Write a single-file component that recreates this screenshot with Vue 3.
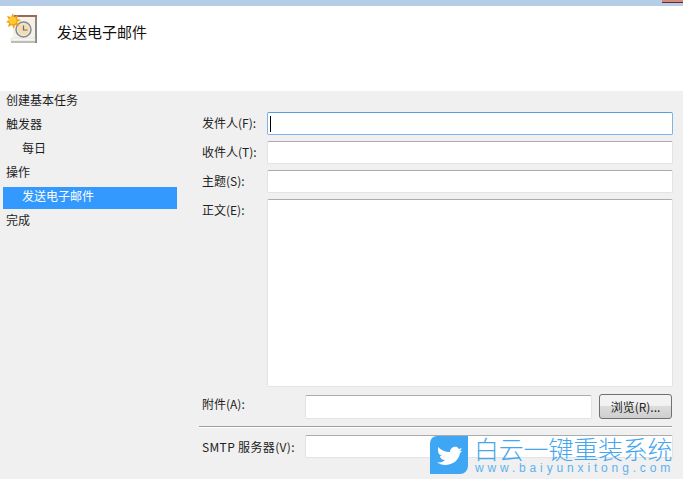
<script setup>
const tasks = [
  { label: '创建基本任务' },
  { label: '触发器' },
  { label: '每日', sub: true },
  { label: '操作' },
  { label: '发送电子邮件', sub: true, active: true },
  { label: '完成' },
]
</script>

<template>
  <div class="page">
    <div class="titlebar"><span class="close"></span></div>
    <header class="head">
      <svg class="icon" width="32" height="32" viewBox="0 0 32 32">
        <rect x="7" y="2" width="23" height="25" fill="#f6f2e8" />
        <rect x="8" y="2" width="23" height="2" fill="#9a6a55" />
        <rect x="29" y="4" width="2" height="26" fill="#8a8a8a" />
        <rect x="5" y="25" width="24" height="3" fill="#f4f4f0" stroke="#d8d8d2" stroke-width="0.500" />
        <rect x="5" y="28" width="24" height="2" fill="#bdbdb6" />
        <circle cx="17.500" cy="16.500" r="7.500" fill="#e8e8e8" stroke="#8a8a8a" stroke-width="1.500" />
        <circle cx="17.500" cy="16.500" r="5.500" fill="#f5dcae" />
        <path d="M17.500 12.500V17H21.500" fill="none" stroke="#66707a" stroke-width="1.200" />
        <path d="M7 0l1 4 4-2-1 4 4 1-4 2 2 4-4-1-1 4-2-4-4 2 1-4-3-1 3-2-2-4 4 1z" fill="#f59f10" />
        <circle cx="6.700" cy="7.500" r="3.800" fill="#ffc933" />
      </svg>
      <h1 class="title">发送电子邮件</h1>
    </header>
    <main class="body">
      <nav class="nav">
        <div
          v-for="t in tasks"
          :key="t.label"
          class="nav-item"
          :class="{ sub: t.sub, active: t.active }"
        >{{ t.label }}</div>
      </nav>
      <form class="form" @submit.prevent>
        <div class="row">
          <label>发件人(F):</label>
          <div class="input focus"><span class="caret"></span></div>
        </div>
        <div class="row">
          <label>收件人(T):</label>
          <div class="input"></div>
        </div>
        <div class="row">
          <label>主题(S):</label>
          <div class="input"></div>
        </div>
        <div class="row tall">
          <label>正文(E):</label>
          <div class="input"></div>
        </div>
        <div class="row wide attach">
          <label>附件(A):</label>
          <div class="input"></div>
          <button type="button" class="btn">浏览(R)...</button>
        </div>
        <div class="sep"></div>
        <div class="row smtp">
          <label>SMTP 服务器(V):</label>
          <div class="input"></div>
        </div>
      </form>
    </main>
    <div class="mark">
      <svg class="bird" width="38" height="38" viewBox="0 0 38 38">
        <path d="M7 0H38V30a8 8 0 0 1-8 8H0V7a7 7 0 0 1 7-7z" fill="#3ea6f2" />
        <path d="M8 11C11 14 15 16 20 16C20 12 24 10 27 11L29 13L32 12L30 15L32 15L30 17C29 24 23 29 15 29C12 29 9 28 7 26C10 27 13 26 15 24C12 24 10 22 10 20L12 20C9 19 8 17 8 14Z" fill="#fff" />
      </svg>
      <div class="brand">
        <div class="brand-cn">白云一键重装系统</div>
        <div class="brand-en">www.baiyunxitong.com</div>
      </div>
    </div>
  </div>
</template>

<style scoped>
.page {
  position: relative;
  width: 683px;
  height: 479px;
  overflow: hidden;
  background: #f0f0f0;
  color: #222;
  font: 12px/16px "Noto Sans CJK SC", "Liberation Sans", sans-serif;
}
.titlebar {
  position: relative;
  height: 6px;
  background: #b5cde6;
}
.close {
  position: absolute;
  top: 0;
  left: 662px;
  width: 21px;
  height: 2px;
  background: #d98a7c;
  border-bottom: 1px solid #5a3030;
}
.head {
  box-sizing: border-box;
  height: 85px;
  background: #fff;
  display: flex;
  align-items: flex-start;
  padding: 7px 0 0 6px;
}
.icon {
  width: 32px;
  height: 32px;
  overflow: visible;
}
.title {
  margin: 9px 0 0 19px;
  font-size: 15px;
  line-height: 20px;
  font-weight: 400;
  color: #111;
}
.body {
  display: flex;
}
.nav {
  width: 177px;
  flex: none;
}
.nav-item {
  height: 22px;
  margin: 0 0 2px 3px;
  padding-left: 3px;
  line-height: 17px;
  color: #1c1c1c;
}
.nav-item.sub {
  padding-left: 19px;
}
.nav-item.active {
  background: #3399ff;
  color: #fff;
}
.form {
  flex: none;
  width: 478px;
  margin-left: 25px;
  padding-top: 21px;
}
.row {
  display: grid;
  grid-template-columns: 65px 406px;
  height: 23px;
  margin-bottom: 6px;
}
.row label {
  line-height: 21px;
  color: #222;
}
.tall {
  height: 188px;
  margin-bottom: 8px;
}
.wide {
  grid-template-columns: 103px 287px 80px;
  margin-bottom: 0;
}
.wide label {
  line-height: 18px;
}
.smtp {
  grid-template-columns: 103px 368px;
}
.smtp label {
  letter-spacing: 0.350px;
  white-space: nowrap;
  line-height: 23px;
}
.input {
  box-sizing: border-box;
  position: relative;
  background: #fff;
  border: 1px solid #e2e3ea;
  border-top-color: #ababab;
  border-radius: 2px;
}
.input.focus {
  border-color: #7eb4ea;
  border-top-color: #569de5;
}
.caret {
  position: absolute;
  left: 2px;
  top: 3px;
  width: 1px;
  height: 16px;
  background: #000;
}
.btn {
  box-sizing: border-box;
  width: 73px;
  height: 25px;
  margin: -1px 0 0 7px;
  padding: 0;
  border: 1px solid #707070;
  border-radius: 3px;
  background: linear-gradient(#f2f2f2 0 45%, #dcdcdc 50%, #cfcfcf);
  font: inherit;
  color: #222;
}
.sep {
  height: 0;
  width: 473px;
  margin: 8px 0 7px -3px;
  border-top: 1px solid #a0a0a0;
  border-bottom: 1px solid #fff;
}
.mark {
  position: absolute;
  left: 430px;
  top: 435px;
  display: flex;
  gap: 6px;
}
.bird {
  display: block;
  margin-top: 1px;
}
.brand {
  width: 198px;
  color: #45a6ee;
}
.brand-cn {
  font-size: 25px;
  line-height: 27px;
  font-weight: 300;
  letter-spacing: -0.200px;
  white-space: nowrap;
}
.brand-en {
  font: 12px/13px "Liberation Sans", sans-serif;
  letter-spacing: 3.850px;
  white-space: nowrap;
  color: #5fb2ee;
  padding-left: 1px;
}
</style>
